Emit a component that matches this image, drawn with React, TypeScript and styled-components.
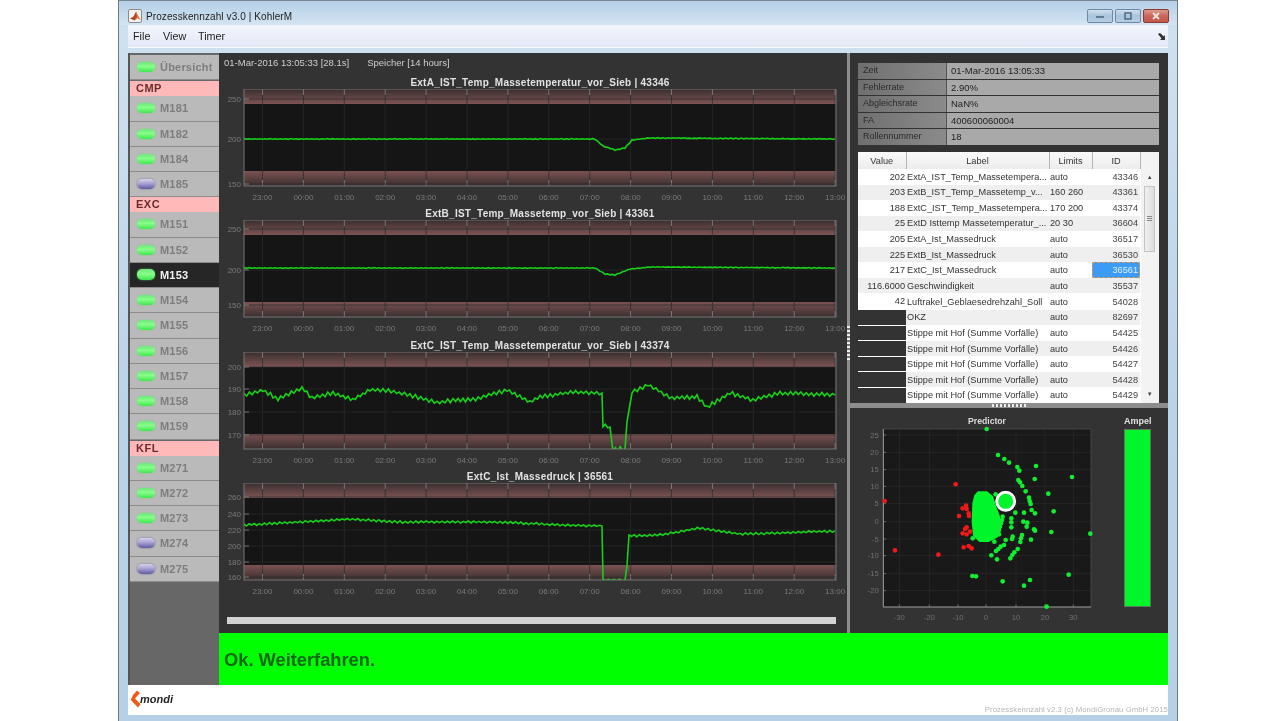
import * as React from 'react';
import styled, { createGlobalStyle } from 'styled-components';

const GlobalStyle = createGlobalStyle`
  html, body { margin: 0; padding: 0; background: #fff; }
  body { font-family: "Liberation Sans", Arial, sans-serif; overflow: hidden; }
`;

const Page = styled.div`
  width: 1280px;
  height: 721px;
  display: flex;
  padding-left: 118px;
  box-sizing: border-box;
  background: #fff;
`;

const Window = styled.div`
  width: 1060px;
  height: 721px;
  box-sizing: border-box;
  display: flex;
  flex-direction: column;
  background: linear-gradient(#bcd5ea, #cfe1f0 30px, #b9d3ea 400px, #b6d0e8);
  border-left: 1px solid #6d7a86;
  border-right: 1px solid #6d7a86;
  border-top: 1px solid #7a8790;
  filter: blur(0.6px);
`;

const TitleBar = styled.div`
  height: 24px;
  box-sizing: border-box;
  display: flex;
  align-items: center;
  padding: 6px 8px 0 9px;
  gap: 4px;
  background: linear-gradient(#b4cfe6, #d4e4f2);
  font-size: 10px;
  color: #222;
`;

const TitleText = styled.span`
  flex: 1;
  letter-spacing: 0.1px;
`;

const WinButtons = styled.div`
  display: flex;
  gap: 2px;
`;

const WinButton = styled.div<{ $close?: boolean }>`
  width: 26px;
  height: 14px;
  box-sizing: border-box;
  border: 1px solid ${p => (p.$close ? '#8b3a33' : '#6b8aa5')};
  border-radius: 2px;
  display: flex;
  align-items: center;
  justify-content: center;
  background: ${p =>
    p.$close
      ? 'linear-gradient(#dd9a8e, #c9675a 50%, #c2574a)'
      : 'linear-gradient(#cfe0ef, #a9c3da 50%, #b7cfe4)'};
`;

const MenuBar = styled.div`
  height: 22px;
  display: flex;
  align-items: center;
  padding: 0 3px 0 5px;
  margin: 0 9px;
  background: linear-gradient(#f3f5fc, #e4e9f6);
  font-size: 10.8px;
  color: #222;
  border-bottom: 1px solid #f8f9fd;
`;

const MenuItem = styled.span<{ $width: number }>`
  width: ${p => p.$width}px;
`;

const MenuSpacer = styled.span`
  flex: 1;
`;

const Client = styled.div`
  margin: 5px 9px 0;
  width: 1040px;
  height: 662px;
  display: flex;
  flex-direction: column;
  background: #fff;
`;

const AppArea = styled.div`
  height: 632px;
  display: flex;
  background: #333;
`;

const Sidebar = styled.div`
  width: 91px;
  flex: none;
  box-sizing: border-box;
  padding-top: 2px;
  display: flex;
  flex-direction: column;
  background: #676767;
  border-left: 2px solid #555;
`;

const NavButton = styled.div<{ $active?: boolean }>`
  height: 25.25px;
  flex: none;
  box-sizing: border-box;
  display: flex;
  align-items: center;
  gap: 5px;
  padding-left: 7px;
  background: ${p => (p.$active ? '#262626' : '#bababa')};
  border-bottom: 1px solid #8c8c8c;
  color: ${p => (p.$active ? '#f2f2f2' : '#7d7d7d')};
  font-size: 11px;
  font-weight: bold;
  letter-spacing: 0.2px;
`;

const Led = styled.span<{ $off?: boolean; $active?: boolean }>`
  width: 18px;
  height: ${p => (p.$active ? 11 : 10)}px;
  flex: none;
  border-radius: 5px;
  box-shadow: 0 0 2px ${p => (p.$off ? 'rgba(60, 50, 120, 0.6)' : 'rgba(90, 230, 110, 0.7)')};
  background: ${p =>
    p.$off
      ? 'linear-gradient(#d6d2ec, #a8a2d4 45%, #5f5a9c)'
      : 'linear-gradient(#6fe67a, #86ff8a 45%, #3fe64d)'};
`;

const NavHeader = styled.div<{ $top?: number }>`
  height: 15px;
  flex: none;
  margin-top: ${p => p.$top ?? 0}px;
  padding-left: 6px;
  background: #ffb9b9;
  color: #6b2b2b;
  font-size: 11px;
  font-weight: bold;
  letter-spacing: 0.5px;
  line-height: 14px;
`;

const Workspace = styled.div`
  flex: 1;
  min-width: 0;
  display: flex;
  flex-direction: column;
`;

const TopRow = styled.div`
  height: 580px;
  display: flex;
`;

const PlotsColumn = styled.div`
  width: 628px;
  flex: none;
  display: flex;
  flex-direction: column;
`;

const PlotsHeader = styled.div`
  height: 23px;
  display: flex;
  align-items: center;
  gap: 18px;
  padding: 0 0 4px 5px;
  box-sizing: border-box;
  color: #cfcfcf;
  font-size: 9.5px;
`;

const ChartBlock = styled.div<{ $height: number }>`
  height: ${p => p.$height}px;
  flex: none;
  display: flex;
  flex-direction: column;
`;

const ChartTitle = styled.div`
  height: 13px;
  padding: 0 11px 0 25px;
  text-align: center;
  color: #e2e2e2;
  font-size: 10px;
  font-weight: bold;
  line-height: 13px;
  letter-spacing: 0.25px;
`;

const PlotSvg = styled.svg`
  display: block;
  flex: none;
`;

const DefsSvg = styled.svg`
  position: absolute;
`;

const HScroll = styled.div`
  height: 7px;
  margin: 16px 11px 0 8px;
  background: #d2d2d2;
`;

const VSplitter = styled.div`
  width: 3px;
  flex: none;
  display: flex;
  align-items: center;
  background: #8d8d8d;
`;

const Grip = styled.div<{ $horizontal?: boolean }>`
  width: ${p => (p.$horizontal ? '34px' : '3px')};
  height: ${p => (p.$horizontal ? '3px' : '34px')};
  background: repeating-linear-gradient(
    ${p => (p.$horizontal ? '90deg' : '0deg')},
    #eee 0 2px,
    #777 2px 4px
  );
`;

const RightColumn = styled.div`
  flex: 1;
  min-width: 0;
  display: flex;
  flex-direction: column;
`;

const RightTop = styled.div`
  height: 350px;
  box-sizing: border-box;
  padding: 10px 9px 0 8px;
  display: flex;
  flex-direction: column;
  gap: 7px;
  background: #333;
`;

const InfoGrid = styled.div`
  display: grid;
  grid-template-columns: 88px 1fr;
  grid-auto-rows: 15.5px;
  row-gap: 1px;
  height: 82px;
  font-size: 9px;
  line-height: 15px;
  color: #222;
`;

const InfoLabel = styled.div`
  padding-left: 5px;
  background: linear-gradient(90deg, #6f6f6f, #8b8b8b);
  color: #2a2a2a;
`;

const InfoValue = styled.div`
  padding-left: 4px;
  background: #a9a9a9;
  border-left: 1px solid #555;
  font-size: 9.5px;
`;

const TableWrap = styled.div`
  height: 251px;
  display: flex;
  background: #fff;
`;

const DataTable = styled.table`
  width: 282px;
  height: 251px;
  table-layout: fixed;
  border-collapse: collapse;
  font-size: 9.2px;
  color: #333;
`;

const HeadCell = styled.th`
  height: 17px;
  padding: 0;
  font-weight: normal;
  text-align: center;
  background: linear-gradient(#fafafa, #ececec);
  border-right: 1px solid #b5b5b5;
  color: #333;
`;

const Row = styled.tr<{ $odd: boolean }>`
  background: ${p => (p.$odd ? '#efefef' : '#fff')};
`;

const ValueCell = styled.td<{ $empty: boolean }>`
  padding: 0 1px 0 0;
  text-align: right;
  white-space: nowrap;
  background: ${p => (p.$empty ? '#333' : 'transparent')};
  background-clip: padding-box;
  border-top: ${p => (p.$empty ? '1px solid #fff' : 'none')};
`;

const TextCell = styled.td`
  padding: 0 0 0 1px;
  white-space: nowrap;
  overflow: hidden;
`;

const IdCell = styled.td<{ $selected: boolean }>`
  padding: 0 2px 0 0;
  text-align: right;
  box-sizing: border-box;
  color: ${p => (p.$selected ? '#dff0ff' : '#444')};
  background: ${p => (p.$selected ? '#3c9bf5' : 'transparent')};
  outline: ${p => (p.$selected ? '1px dashed #d89a55' : 'none')};
  outline-offset: -1px;
`;

const Scrollbar = styled.div`
  flex: 1;
  display: flex;
  flex-direction: column;
  align-items: center;
  background: #f3f3f3;
  padding-top: 17px;
  font-size: 6px;
  color: #444;
`;

const ScrollArrow = styled.div`
  height: 17px;
  line-height: 17px;
`;

const ScrollThumb = styled.div`
  width: 11px;
  height: 66px;
  flex: none;
  box-sizing: border-box;
  border: 1px solid #c4c4c4;
  background: linear-gradient(90deg, #f0f0f0, #dcdcdc);
  display: flex;
  align-items: center;
  justify-content: center;
`;

const ThumbMark = styled.div`
  width: 5px;
  height: 6px;
  background: repeating-linear-gradient(#888 0 1px, transparent 1px 2px);
`;

const ScrollSpacer = styled.div`
  flex: 1;
`;

const HSplitter = styled.div`
  height: 5px;
  display: flex;
  justify-content: center;
  align-items: center;
  background: #8d8d8d;
`;

const RightBottom = styled.div`
  flex: 1;
  display: flex;
  background: #333;
`;

const AmpelColumn = styled.div`
  margin-left: 12px;
  width: 27px;
  display: flex;
  flex-direction: column;
`;

const AmpelTitle = styled.div`
  height: 21px;
  text-align: center;
  line-height: 27px;
  color: #e2e2e2;
  font-size: 9px;
  font-weight: bold;
`;

const AmpelBar = styled.div`
  height: 178px;
  box-sizing: border-box;
  background: #00f52a;
  border: 1px solid #5a7a5a;
`;

const StatusBar = styled.div`
  flex: 1;
  display: flex;
  align-items: center;
  padding: 1px 0 0 5px;
  background: #00ff00;
  color: #126512;
  font-size: 18.3px;
  font-weight: bold;
`;

const Footer = styled.div`
  flex: 1;
  display: flex;
  align-items: flex-start;
  justify-content: space-between;
  padding: 0 0 0 2px;
`;

const Logo = styled.div`
  display: flex;
  align-items: center;
  margin-top: 5px;
`;

const LogoText = styled.span`
  margin-left: -1px;
  font-size: 11px;
  font-weight: bold;
  font-style: italic;
  color: #222;
`;

const Copyright = styled.div`
  margin-top: 20px;
  color: #b5b5b5;
  font-size: 7.7px;
  letter-spacing: 0.1px;
`;

const navGroups: { title?: string; top?: number; items: { name: string; off?: boolean; active?: boolean }[] }[] = [
  { items: [{ name: 'Übersicht' }] },
  {
    title: 'CMP',
    top: 1,
    items: [{ name: 'M181' }, { name: 'M182' }, { name: 'M184' }, { name: 'M185', off: true }],
  },
  {
    title: 'EXC',
    items: [
      { name: 'M151' },
      { name: 'M152' },
      { name: 'M153', active: true },
      { name: 'M154' },
      { name: 'M155' },
      { name: 'M156' },
      { name: 'M157' },
      { name: 'M158' },
      { name: 'M159' },
    ],
  },
  {
    title: 'KFL',
    top: 1,
    items: [
      { name: 'M271' },
      { name: 'M272' },
      { name: 'M273' },
      { name: 'M274', off: true },
      { name: 'M275', off: true },
    ],
  },
];

type Pt = [number, number];

const rnd = (i: number, seed: number) => {
  const v = Math.sin(i * 12.9898 + seed * 78.233) * 43758.5453;
  return v - Math.floor(v);
};

// interpolate between key points and add a zigzag on top
const makeLine = (keys: Pt[], noise: number, seed: number) => {
  const out: string[] = [];
  let i = 0;
  for (let k = 0; k < keys.length - 1; k++) {
    const [x0, y0] = keys[k];
    const [x1, y1] = keys[k + 1];
    const steps = Math.max(1, Math.round((x1 - x0) / 2.6));
    for (let s = 0; s < steps; s++) {
      const t = s / steps;
      const steep = Math.abs(y1 - y0) / Math.max(1, x1 - x0) > 2;
      const n = steep ? 0 : (i % 2 ? 1 : -1) * noise * (0.4 + 0.6 * rnd(i, seed));
      out.push(`${(x0 + (x1 - x0) * t).toFixed(1)},${(y0 + (y1 - y0) * t + n).toFixed(1)}`);
      i++;
    }
  }
  const last = keys[keys.length - 1];
  out.push(`${last[0]},${last[1]}`);
  return out.join(' ');
};

const hours = ['23:00', '00:00', '01:00', '02:00', '03:00', '04:00', '05:00', '06:00', '07:00', '08:00', '09:00', '10:00', '11:00', '12:00', '13:00'];

const charts = [
  {
    title: 'ExtA_IST_Temp_Massetemperatur_vor_Sieb | 43346',
    height: 131,
    top: 89,
    ticks: [[99, '250'], [139, '200'], [184, '150']] as [number, string][],
    noise: 0.4,
    keys: [[244, 139], [595, 139], [603, 146], [615, 150], [625, 148], [632, 140], [650, 138], [835, 139]] as Pt[],
  },
  {
    title: 'ExtB_IST_Temp_Massetemp_vor_Sieb | 43361',
    height: 132,
    top: 220,
    ticks: [[229, '250'], [270, '200'], [305, '150']] as [number, string][],
    noise: 0.4,
    keys: [[244, 268], [595, 268], [605, 274], [615, 275], [630, 269], [650, 267], [835, 268]] as Pt[],
  },
  {
    title: 'ExtC_IST_Temp_Massetemperatur_vor_Sieb | 43374',
    height: 131,
    top: 352,
    ticks: [[367, '200'], [389, '190'], [412, '180'], [435, '170']] as [number, string][],
    noise: 2.2,
    keys: [
      [244, 395], [263, 390], [278, 399], [302, 388], [312, 398], [333, 393], [353, 400], [370, 390], [383, 390],
      [410, 395], [437, 403], [453, 400], [473, 400], [507, 390], [530, 402], [540, 397], [573, 392], [602, 393],
      [603, 425], [610, 427], [613, 449], [625, 449], [627, 422], [632, 392], [648, 385], [672, 398], [697, 397],
      [707, 407], [730, 393], [753, 400], [780, 393], [835, 395],
    ] as Pt[],
  },
  {
    title: 'ExtC_Ist_Massedruck | 36561',
    height: 131,
    top: 483,
    ticks: [[497, '260'], [514, '240'], [530, '220'], [546, '200'], [562, '180'], [577, '160']] as [number, string][],
    noise: 1.2,
    keys: [
      [244, 525], [300, 522], [350, 519], [400, 522], [500, 522], [560, 525], [602, 526], [603, 580],
      [625, 580], [627, 566], [629, 536], [660, 535], [700, 528], [740, 534], [780, 533], [835, 531],
    ] as Pt[],
  },
];

const FRAME_H = 97;
const BAND_H = 15;

const Chart = ({ c }: { c: (typeof charts)[number] }) => {
  const t = c.top;
  const hourX = (i: number) => 262.5 + i * 40.9;
  return (
    <PlotSvg width={628} height={c.height - 13} viewBox={`219 ${t} 628 ${c.height - 13}`}>
      <rect x={244} y={t} width={592} height={FRAME_H} fill="#151515" />
      <rect x={244} y={t} width={592} height={BAND_H} fill="url(#bandTop)" />
      <rect x={244} y={t + FRAME_H - BAND_H} width={592} height={BAND_H} fill="url(#bandBottom)" />
      {hours.map((h, i) => (
        <g key={h}>
          <line x1={hourX(i)} x2={hourX(i)} y1={t} y2={t + FRAME_H} stroke="#2b2b2b" strokeWidth={0.7} />
          <line x1={hourX(i)} x2={hourX(i)} y1={t} y2={t + 6} stroke="#8a8a8a" strokeWidth={0.8} />
          <line x1={hourX(i)} x2={hourX(i)} y1={t + FRAME_H - 6} y2={t + FRAME_H} stroke="#8a8a8a" strokeWidth={0.8} />
          <text x={hourX(i)} y={t + 111} fill="#7a7a7a" fontSize={8} textAnchor="middle">{h}</text>
        </g>
      ))}
      {c.ticks.map(([y, label]) => (
        <g key={label}>
          <line x1={244} x2={836} y1={y} y2={y} stroke="#2b2b2b" strokeWidth={0.7} />
          <line x1={244} x2={249} y1={y} y2={y} stroke="#8a8a8a" strokeWidth={0.8} />
          <text x={241} y={y + 3} fill="#7a7a7a" fontSize={8} textAnchor="end">{label}</text>
        </g>
      ))}
      <clipPath id={`clip${t}`}>
        <rect x={244} y={t} width={592} height={FRAME_H} />
      </clipPath>
      <polyline
        points={makeLine(c.keys, c.noise, t)}
        fill="none"
        stroke="#18d018"
        strokeWidth={1.6}
        clipPath={`url(#clip${t})`}
      />
      <rect x={244} y={t} width={592} height={FRAME_H} fill="none" stroke="#767676" strokeWidth={1} />
    </PlotSvg>
  );
};

const infoRows = [
  ['Zeit', '01-Mar-2016 13:05:33'],
  ['Fehlerrate', '2.90%'],
  ['Abgleichsrate', 'NaN%'],
  ['FA', '400600060004'],
  ['Rollennummer', '18'],
];

const stippe = 'Stippe mit Hof (Summe Vorfälle)';
const tableRows: [string, string, string, string][] = [
  ['202', 'ExtA_IST_Temp_Massetempera...', 'auto', '43346'],
  ['203', 'ExtB_IST_Temp_Massetemp_v...', '160 260', '43361'],
  ['188', 'ExtC_IST_Temp_Massetempera...', '170 200', '43374'],
  ['25', 'ExtD Isttemp Massetemperatur_...', '20 30', '36604'],
  ['205', 'ExtA_Ist_Massedruck', 'auto', '36517'],
  ['225', 'ExtB_Ist_Massedruck', 'auto', '36530'],
  ['217', 'ExtC_Ist_Massedruck', 'auto', '36561'],
  ['116.6000', 'Geschwindigkeit', 'auto', '35537'],
  ['42', 'Luftrakel_Geblaesedrehzahl_Soll', 'auto', '54028'],
  ['', 'OKZ', 'auto', '82697'],
  ['', stippe, 'auto', '54425'],
  ['', stippe, 'auto', '54426'],
  ['', stippe, 'auto', '54427'],
  ['', stippe, 'auto', '54428'],
  ['', stippe, 'auto', '54429'],
];

// scatter points, coordinates are 3x the screen pixels of the panel
const greenDots: Pt[] = [
  [410, 72], [444, 150], [463, 162], [477, 173], [502, 186], [508, 197], [558, 183], [666, 216], [554, 222],
  [505, 225], [510, 232], [517, 243], [527, 259], [595, 266], [537, 278], [539, 288], [542, 297], [545, 315],
  [555, 325], [611, 319], [522, 323], [496, 323], [520, 350], [532, 353], [530, 365], [552, 373], [555, 377],
  [604, 381], [721, 386], [543, 404], [516, 390], [513, 400], [511, 411], [488, 395], [486, 402], [503, 432],
  [493, 442], [487, 450], [481, 460], [467, 405], [462, 420], [452, 425], [445, 432], [438, 438], [424, 451],
  [441, 463], [433, 410], [447, 388], [484, 340], [484, 352], [484, 367], [458, 335], [456, 345], [453, 355],
  [450, 365], [447, 375], [367, 513], [378, 514], [458, 529], [540, 525], [522, 542], [656, 509], [590, 605],
  [368, 400], [437, 268],
];
const redDots: Pt[] = [
  [317, 238], [104, 288], [348, 302], [338, 310], [350, 312], [356, 325], [357, 333], [327, 333], [350, 367],
  [345, 372], [360, 380], [338, 385], [350, 388], [135, 436], [265, 449], [341, 427], [356, 423], [365, 430],
];
const scatterX: [number, string][] = [[148, '-30'], [238, '-20'], [324, '-10'], [408, '0'], [498, '10'], [585, '20'], [670, '30']];
const scatterY: [number, string][] = [
  [90, '25'], [142, '20'], [194, '15'], [244, '10'], [296, '5'], [350, '0'], [402, '-5'], [452, '-10'], [506, '-15'], [557, '-20'],
];

const Scatter = () => (
  <PlotSvg width={262} height={225} viewBox="0 9 786 675">
    <text x={411} y={58} fill="#dcdcdc" fontSize={26} fontWeight="bold" textAnchor="middle">Predictor</text>
    <rect x={100} y={72} width={623} height={534} fill="#191919" />
    {scatterX.map(([x, l]) => (
      <g key={l}>
        <line x1={x} x2={x} y1={72} y2={606} stroke="#2c2c2c" strokeWidth={2} />
        <line x1={x} x2={x} y1={598} y2={606} stroke="#888" strokeWidth={2} />
        <text x={x} y={644} fill="#707070" fontSize={23} textAnchor="middle">{l}</text>
      </g>
    ))}
    {scatterY.map(([y, l]) => (
      <g key={l}>
        <line x1={100} x2={723} y1={y} y2={y} stroke="#2c2c2c" strokeWidth={2} />
        <line x1={100} x2={108} y1={y} y2={y} stroke="#888" strokeWidth={2} />
        <text x={86} y={y + 8} fill="#707070" fontSize={23} textAnchor="end">{l}</text>
      </g>
    ))}
    <path d="M100 72H723V606" fill="none" stroke="#555" strokeWidth={2} />
    <path d="M100 72V606H723" fill="none" stroke="#a0a0a0" strokeWidth={3} />
    {redDots.map(([x, y], i) => (
      <circle key={i} cx={x} cy={y} r={7} fill="#f01818" />
    ))}
    <path
      d="M385 264L410 264L425 277L432 300L445 335L448 370L440 393L415 406L390 406L374 390L370 350L372 295L377 274Z"
      fill="#00f52a"
      stroke="#00f52a"
      strokeWidth={10}
      strokeLinejoin="round"
    />
    {greenDots.map(([x, y], i) => (
      <circle key={i} cx={x} cy={y} r={7} fill="#10ee30" />
    ))}
    <circle cx={467} cy={289} r={27} fill="#00f52a" stroke="#fff" strokeWidth={9} />
  </PlotSvg>
);

const AppIcon = () => (
  <svg width={14} height={14} viewBox="0 0 14 14">
    <rect x={0.5} y={0.5} width={13} height={13} rx={1.5} fill="#f2f2f2" stroke="#8a8a8a" />
    <path d="M2 9.5L5.5 7.5L8 2.5L10 7L12.5 10.5L9 9L6.5 11.5Z" fill="#b5482a" />
    <path d="M8 2.5L10 7L12.5 10.5L9 9Z" fill="#e8872f" />
  </svg>
);

const MondiMark = () => (
  <svg width={11} height={18} viewBox="0 0 11 18">
    <path d="M7 0.5L10 3L5 8.5L10.5 14L8 17.5L0.8 10L3 5Z" fill="#ee5a1c" />
  </svg>
);

export default function App() {
  return (
    <Page>
      <GlobalStyle />
      <Window>
        <DefsSvg width={0} height={0}>
          <defs>
            <linearGradient id="bandTop" x1="0" y1="0" x2="0" y2="1">
              <stop offset="0" stopColor="#3a2e2e" />
              <stop offset="1" stopColor="#7d5454" />
            </linearGradient>
            <linearGradient id="bandBottom" x1="0" y1="0" x2="0" y2="1">
              <stop offset="0" stopColor="#7b5252" />
              <stop offset="1" stopColor="#3a2e2e" />
            </linearGradient>
          </defs>
        </DefsSvg>
        <TitleBar>
          <AppIcon />
          <TitleText>Prozesskennzahl v3.0 | KohlerM</TitleText>
          <WinButtons>
            <WinButton>
              <svg width={10} height={6} viewBox="0 0 10 6"><rect x={1} y={3} width={8} height={2} fill="#5d7d99" /></svg>
            </WinButton>
            <WinButton>
              <svg width={10} height={8} viewBox="0 0 10 8"><rect x={2} y={1} width={6} height={6} fill="none" stroke="#47637c" strokeWidth={1.4} /></svg>
            </WinButton>
            <WinButton $close>
              <svg width={10} height={8} viewBox="0 0 10 8"><path d="M2 1L8 7M8 1L2 7" stroke="#f6e4e0" strokeWidth={1.8} /></svg>
            </WinButton>
          </WinButtons>
        </TitleBar>
        <MenuBar>
          <MenuItem $width={30}>File</MenuItem>
          <MenuItem $width={35}>View</MenuItem>
          <MenuItem $width={40}>Timer</MenuItem>
          <MenuSpacer />
          <svg width={7} height={7} viewBox="0 0 7 7"><path d="M0 1L2 0L6 3.5L7 2V7H2L3.5 5.5Z" fill="#333" /></svg>
        </MenuBar>
        <Client>
          <AppArea>
            <Sidebar>
              {navGroups.map((g, i) => (
                <React.Fragment key={i}>
                  {g.title && <NavHeader $top={g.top}>{g.title}</NavHeader>}
                  {g.items.map(it => (
                    <NavButton key={it.name} $active={it.active}>
                      <Led $off={it.off} $active={it.active} />
                      {it.name}
                    </NavButton>
                  ))}
                </React.Fragment>
              ))}
            </Sidebar>
            <Workspace>
              <TopRow>
                <PlotsColumn>
                  <PlotsHeader>
                    <span>01-Mar-2016 13:05:33 [28.1s]</span>
                    <span>Speicher [14 hours]</span>
                  </PlotsHeader>
                  {charts.map(c => (
                    <ChartBlock key={c.top} $height={c.height}>
                      <ChartTitle>{c.title}</ChartTitle>
                      <Chart c={c} />
                    </ChartBlock>
                  ))}
                  <HScroll />
                </PlotsColumn>
                <VSplitter>
                  <Grip />
                </VSplitter>
                <RightColumn>
                  <RightTop>
                    <InfoGrid>
                      {infoRows.map(([k, v]) => (
                        <React.Fragment key={k}>
                          <InfoLabel>{k}</InfoLabel>
                          <InfoValue>{v}</InfoValue>
                        </React.Fragment>
                      ))}
                    </InfoGrid>
                    <TableWrap>
                      <DataTable>
                        <colgroup>
                          <col width={48} />
                          <col width={143} />
                          <col width={43} />
                          <col width={48} />
                        </colgroup>
                        <thead>
                          <tr>
                            <HeadCell>Value</HeadCell>
                            <HeadCell>Label</HeadCell>
                            <HeadCell>Limits</HeadCell>
                            <HeadCell>ID</HeadCell>
                          </tr>
                        </thead>
                        <tbody>
                          {tableRows.map((r, i) => (
                            <Row key={r[3]} $odd={i % 2 === 1}>
                              <ValueCell $empty={r[0] === ''}>{r[0]}</ValueCell>
                              <TextCell>{r[1]}</TextCell>
                              <TextCell>{r[2]}</TextCell>
                              <IdCell $selected={r[3] === '36561'}>{r[3]}</IdCell>
                            </Row>
                          ))}
                        </tbody>
                      </DataTable>
                      <Scrollbar>
                        <ScrollArrow>▲</ScrollArrow>
                        <ScrollThumb>
                          <ThumbMark />
                        </ScrollThumb>
                        <ScrollSpacer />
                        <ScrollArrow>▼</ScrollArrow>
                      </Scrollbar>
                    </TableWrap>
                  </RightTop>
                  <HSplitter>
                    <Grip $horizontal />
                  </HSplitter>
                  <RightBottom>
                    <Scatter />
                    <AmpelColumn>
                      <AmpelTitle>Ampel</AmpelTitle>
                      <AmpelBar />
                    </AmpelColumn>
                  </RightBottom>
                </RightColumn>
              </TopRow>
              <StatusBar>Ok. Weiterfahren.</StatusBar>
            </Workspace>
          </AppArea>
          <Footer>
            <Logo>
              <MondiMark />
              <LogoText>mondi</LogoText>
            </Logo>
            <Copyright>Prozesskennzahl v2.3 (c) MondiGronau GmbH 2015</Copyright>
          </Footer>
        </Client>
      </Window>
    </Page>
  );
}
